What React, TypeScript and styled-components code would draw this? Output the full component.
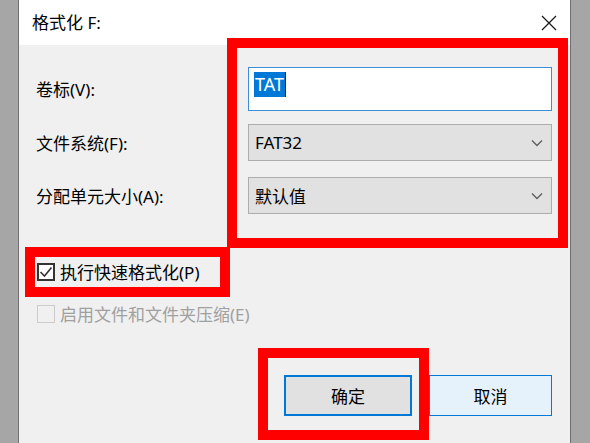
import React from "react";
import styled, { createGlobalStyle } from "styled-components";

const Global = createGlobalStyle`
  html, body { margin: 0; padding: 0; background: #a6a6a6; }
  body { font-family: "Noto Sans", "Noto Sans CJK SC", sans-serif; }
  * { box-sizing: border-box; }
`;

const Page = styled.div`
  position: relative;
  width: 590px;
  height: 443px;
  display: flex;
  overflow: hidden;
  background: #a6a6a6;
`;

const Strip = styled.div<{ $w: number; $side: "left" | "right" }>`
  width: ${(p) => p.$w}px;
  flex: none;
  background: #a6a6a6;
  ${(p) => (p.$side === "left" ? "border-right" : "border-left")}: 1px solid #6f6f6f;
`;

const Dialog = styled.div`
  flex: 1;
  display: flex;
  flex-direction: column;
  background: #f0f0f0;
`;

const TitleBar = styled.div`
  height: 45px;
  flex: none;
  background: #ffffff;
  display: flex;
  align-items: center;
  justify-content: space-between;
  padding: 0 13px 0 13px;
`;

const Title = styled.div`
  font-size: 17px;
  color: #000;
  line-height: 1;
  margin-top: -1px;
`;

const CloseIcon = styled.svg`
  width: 16px;
  height: 16px;
  display: block;
`;

const Body = styled.div`
  flex: 1;
  display: flex;
  flex-direction: column;
  padding: 22px 17px 0 17px;
`;

const FieldRow = styled.div<{ $mt?: number }>`
  display: grid;
  grid-template-columns: 212px 304px;
  align-items: center;
  margin-top: ${(p) => p.$mt ?? 0}px;
`;

const Label = styled.div`
  font-size: 17px;
  color: #000;
  line-height: 1;
  padding-top: 1px;
`;

const TextBox = styled.div`
  height: 44px;
  background: #fff;
  border: 1px solid #3c8fd6;
  display: flex;
  align-items: center;
  padding-left: 5px;
`;

const Selected = styled.span`
  background: #0078d7;
  color: #fff;
  font-size: 18px;
  line-height: 25px;
  height: 25px;
  padding: 0 1px;
  margin-top: -9px;
  border-right: 1px solid #222;
`;

const Select = styled.div`
  height: 37px;
  background: #e1e1e1;
  border: 1px solid #adadad;
  display: flex;
  align-items: center;
  justify-content: space-between;
  padding: 0 8px 0 6px;
  font-size: 17px;
  color: #000;
`;

const Chevron = styled.svg`
  width: 12px;
  height: 8px;
  display: block;
`;

const CheckRow = styled.div<{ $mt: number; $disabled?: boolean }>`
  display: flex;
  align-items: center;
  gap: 5px;
  height: 24px;
  margin-top: ${(p) => p.$mt}px;
  padding-left: 1px;
  font-size: 17px;
  line-height: 1;
  color: ${(p) => (p.$disabled ? "#a0a0a0" : "#000")};
`;

const Box = styled.div<{ $disabled?: boolean }>`
  width: 18px;
  height: 18px;
  flex: none;
  border: 2px solid ${(p) => (p.$disabled ? "#cccccc" : "#333333")};
  border-width: ${(p) => (p.$disabled ? "1px" : "2px")};
  background: ${(p) => (p.$disabled ? "#f0f0f0" : "#ffffff")};
  display: flex;
  align-items: center;
  justify-content: center;
`;

const ButtonRow = styled.div`
  display: flex;
  justify-content: flex-end;
  gap: 17px;
  margin-top: 49px;
  padding-right: 1px;
`;

const Button = styled.div<{ $w: number; $primary?: boolean }>`
  width: ${(p) => p.$w}px;
  height: 41px;
  display: flex;
  align-items: center;
  justify-content: center;
  font-size: 17px;
  color: #000;
  background: ${(p) => (p.$primary ? "#e1e1e1" : "#e5f1fb")};
  border: ${(p) => (p.$primary ? "2px solid #0078d7" : "1px solid #0078d7")};
  box-shadow: ${(p) => (p.$primary ? "inset 0 0 0 1px #e1e1e1" : "none")};
`;

const Mark = styled.div<{ $x: number; $y: number; $w: number; $h: number }>`
  position: absolute;
  left: ${(p) => p.$x}px;
  top: ${(p) => p.$y}px;
  width: ${(p) => p.$w}px;
  height: ${(p) => p.$h}px;
  border: 10px solid #ff0000;
  pointer-events: none;
`;

export default function App() {
  return (
    <>
      <Global />
      <Page>
        <Strip $w={19} $side="left" />
        <Dialog>
          <TitleBar>
            <Title>格式化 F:</Title>
            <CloseIcon viewBox="0 0 16 16">
              <path d="M1 1 L15 15 M15 1 L1 15" stroke="#1a1a1a" strokeWidth="1.3" fill="none" />
            </CloseIcon>
          </TitleBar>
          <Body>
            <FieldRow>
              <Label>卷标(V):</Label>
              <TextBox>
                <Selected>TAT</Selected>
              </TextBox>
            </FieldRow>
            <FieldRow $mt={13}>
              <Label>文件系统(F):</Label>
              <Select>
                <span>FAT32</span>
                <Chevron viewBox="0 0 12 8">
                  <path d="M1 1.5 L6 6.5 L11 1.5" stroke="#5f5f5f" strokeWidth="1.4" fill="none" />
                </Chevron>
              </Select>
            </FieldRow>
            <FieldRow $mt={16}>
              <Label>分配单元大小(A):</Label>
              <Select>
                <span>默认值</span>
                <Chevron viewBox="0 0 12 8">
                  <path d="M1 1.5 L6 6.5 L11 1.5" stroke="#5f5f5f" strokeWidth="1.4" fill="none" />
                </Chevron>
              </Select>
            </FieldRow>
            <CheckRow $mt={46}>
              <Box>
                <svg width="14" height="14" viewBox="0 0 14 14">
                  <path d="M1.5 7 L5.5 11 L12.5 2.5" stroke="#333" strokeWidth="1.6" fill="none" />
                </svg>
              </Box>
              <span>执行快速格式化(P)</span>
            </CheckRow>
            <CheckRow $mt={18} $disabled>
              <Box $disabled />
              <span>启用文件和文件夹压缩(E)</span>
            </CheckRow>
            <ButtonRow>
              <Button $w={128} $primary>确定</Button>
              <Button $w={123}>取消</Button>
            </ButtonRow>
          </Body>
        </Dialog>
        <Strip $w={20} $side="right" />
        <Mark $x={227} $y={38} $w={341} $h={210} />
        <Mark $x={25} $y={247} $w={205} $h={50} />
        <Mark $x={258} $y={348} $w={171} $h={92} />
      </Page>
    </>
  );
}
